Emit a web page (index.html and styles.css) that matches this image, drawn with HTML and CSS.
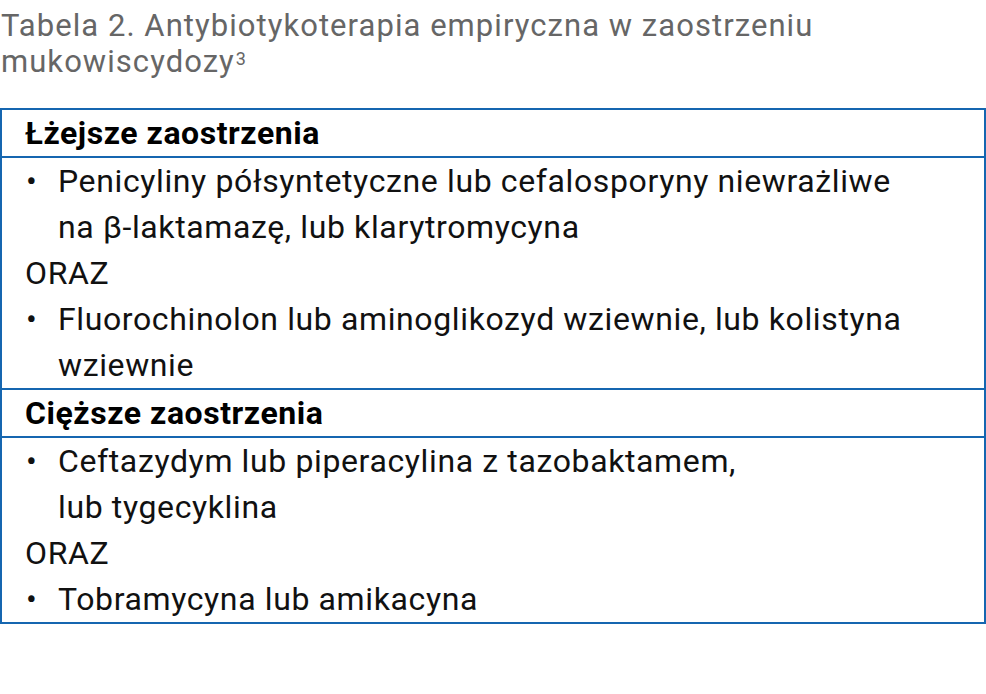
FILE: index.html
```html
<!DOCTYPE html>
<html lang="pl">
<head>
<meta charset="utf-8">
<title>Tabela 2</title>
<link rel="stylesheet" href="styles.css">
</head>
<body>
<h1 class="caption">Tabela 2. Antybiotykoterapia empiryczna w zaostrzeniu<br>mukowiscydozy<sup class="ref">3</sup></h1>
<table class="tbl">
  <tr><th class="head">Łżejsze zaostrzenia</th></tr>
  <tr><td class="body">
    <div class="item"><span class="dot">•</span><span class="txt">Penicyliny półsyntetyczne lub cefalosporyny niewrażliwe<br>na β-laktamazę, lub klarytromycyna</span></div>
    <div class="conj">ORAZ</div>
    <div class="item"><span class="dot">•</span><span class="txt">Fluorochinolon lub aminoglikozyd wziewnie, lub kolistyna<br>wziewnie</span></div>
  </td></tr>
  <tr><th class="head">Cięższe zaostrzenia</th></tr>
  <tr><td class="body">
    <div class="item"><span class="dot">•</span><span class="txt">Ceftazydym lub piperacylina z tazobaktamem,<br>lub tygecyklina</span></div>
    <div class="conj">ORAZ</div>
    <div class="item"><span class="dot">•</span><span class="txt">Tobramycyna lub amikacyna</span></div>
  </td></tr>
</table>
</body>
</html>
```

FILE: styles.css
```css
html, body {
  margin: 0;
  padding: 0;
  background: #ffffff;
}
body {
  font-family: Roboto, "Liberation Sans", sans-serif;
  width: 986px;
}
.caption {
  margin: 8px 0 0 1px;
  font-size: 31px;
  font-weight: 400;
  line-height: 36px;
  letter-spacing: 1.05px;
  color: #666666;
  white-space: nowrap;
}
.ref {
  font-size: 18px;
  letter-spacing: 0;
  vertical-align: 0;
  position: relative;
  top: -7px;
  line-height: 0;
  margin-left: 1px;
}
.tbl {
  margin-top: 28px;
  width: 986px;
  border-collapse: collapse;
  border: 2px solid #1566b0;
}
.head {
  text-align: left;
  font-size: 32px;
  font-weight: 700;
  line-height: 46px;
  letter-spacing: 0.55px;
  padding: 0 0 0 23px;
  color: #000;
  border-bottom: 2px solid #1566b0;
  border-top: 2px solid #1566b0;
}
.body {
  font-size: 32px;
  line-height: 46px;
  letter-spacing: 0.62px;
  color: #111;
  padding: 0 0 0 23px;
}
.item {
  display: flex;
  white-space: nowrap;
}
.dot {
  width: 33px;
  flex: none;
  padding-left: 1px;
  box-sizing: border-box;
}
.conj {
  white-space: nowrap;
}
```
